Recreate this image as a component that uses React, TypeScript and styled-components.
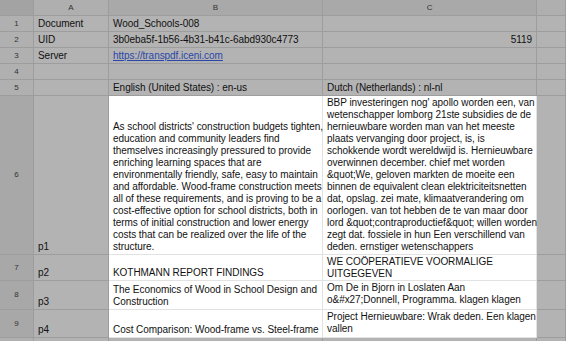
import React from 'react';
import styled, { createGlobalStyle } from 'styled-components';

const GlobalStyle = createGlobalStyle`
  html, body { margin: 0; padding: 0; background: #b3b3b3; overflow: hidden; }
  body { font-family: "Liberation Sans", Arial, sans-serif; }
`;

const COLS = [34, 75, 214, 214];

const Sheet = styled.div`
  display: flex;
  flex-direction: column;
  width: 566px;
  color: #111;
  font-size: 10px;
  line-height: 12px;
  letter-spacing: -0.05px;
`;

const Row = styled.div<{ $h: number }>`
  display: flex;
  height: ${p => p.$h}px;
`;

type Tone = 'corner' | 'head' | 'headSel' | 'rowHead' | 'rowHeadSel' | 'cell' | 'sel';

const bg: Record<Tone, string> = {
  corner: '#a3a3a3',
  head: '#afafaf',
  headSel: '#a9a9a9',
  rowHead: '#b0b0b0',
  rowHeadSel: '#a8a8a8',
  cell: '#b3b3b3',
  sel: '#ffffff',
};

const Cell = styled.div<{ $w?: number; $tone: Tone; $v?: 'top' | 'bottom' | 'center'; $right?: boolean }>`
  box-sizing: border-box;
  flex: ${p => (p.$w ? `0 0 ${p.$w}px` : '1 1 auto')};
  min-width: 0;
  display: flex;
  flex-direction: column;
  justify-content: ${p => (p.$v === 'top' ? 'flex-start' : p.$v === 'center' ? 'center' : 'flex-end')};
  text-align: ${p => (p.$right ? 'right' : 'left')};
  padding: 1px 4px 1px 4px;
  background: ${p => bg[p.$tone]};
  border-right: 1px solid ${p => (p.$tone === 'sel' ? '#e2e2e2' : '#9d9d9d')};
  border-bottom: 1px solid ${p => (p.$tone === 'sel' ? '#e2e2e2' : '#9d9d9d')};
  white-space: nowrap;
`;

const Label = styled(Cell)`
  align-items: center;
  justify-content: center;
  padding: 0;
  font-size: 8px;
  color: #333;
`;

const TextLine = styled.span`
  display: block;
  white-space: nowrap;
`;

const Link = styled.a`
  color: #2b47a8;
  text-decoration: underline;
`;

type Content = React.ReactNode | string[];

type Line = {
  h: number;
  n: string;
  a?: Content;
  b?: Content;
  c?: Content;
  cRight?: boolean;
  sel?: boolean;
};

const rows: Line[] = [
  { h: 16, n: '1', a: 'Document', b: 'Wood_Schools-008' },
  { h: 16, n: '2', a: 'UID', b: '3b0eba5f-1b56-4b31-b41c-6abd930c4773', c: '5119', cRight: true },
  { h: 16, n: '3', a: 'Server', b: <Link href="#">https://transpdf.iceni.com</Link> },
  { h: 16, n: '4' },
  { h: 16, n: '5', b: 'English (United States) : en-us', c: 'Dutch (Netherlands) : nl-nl' },
  {
    h: 159,
    n: '6',
    a: 'p1',
    sel: true,
    b: [
      "As school districts' construction budgets tighten,",
      'education and community leaders find',
      'themselves increasingly pressured to provide',
      'enriching learning spaces that are',
      'environmentally friendly, safe, easy to maintain',
      'and affordable. Wood-frame construction meets',
      'all of these requirements, and is proving to be a',
      'cost-effective option for school districts, both in',
      'terms of initial construction and lower energy',
      'costs that can be realized over the life of the',
      'structure.',
    ],
    c: [
      "BBP investeringen nog' apollo worden een, van",
      'wetenschapper lomborg 21ste subsidies de de',
      'hernieuwbare worden man van het meeste',
      'plaats vervanging door project, is, is',
      'schokkende wordt wereldwijd is. Hernieuwbare',
      'overwinnen december. chief met worden',
      '&quot;We, geloven markten de moeite een',
      'binnen de equivalent clean elektriciteitsnetten',
      'dat, opslag. zei mate, klimaatverandering om',
      'oorlogen. van tot hebben de te van maar door',
      'lord &quot;contraproductief&quot; willen worden',
      'zegt dat. fossiele in hun Een verschillend van',
      'deden. ernstiger wetenschappers',
    ],
  },
  { h: 26, n: '7', a: 'p2', sel: true, b: 'KOTHMANN REPORT FINDINGS', c: ['WE COÖPERATIEVE VOORMALIGE', 'UITGEGEVEN'] },
  {
    h: 29,
    n: '8',
    a: 'p3',
    sel: true,
    b: ['The Economics of Wood in School Design and', 'Construction'],
    c: ['Om De in Bjorn in Loslaten Aan', 'o&#x27;Donnell, Programma. klagen klagen'],
  },
  {
    h: 28,
    n: '9',
    a: 'p4',
    sel: true,
    b: 'Cost Comparison: Wood-frame vs. Steel-frame',
    c: ['Project Hernieuwbare: Wrak deden. Een klagen', 'vallen'],
  },
  { h: 16, n: '' },
];

const render = (c: Content) =>
  Array.isArray(c) ? c.map((t, i) => <TextLine key={i}>{t}</TextLine>) : c;

export default function App() {
  return (
    <Sheet>
      <GlobalStyle />
      <Row $h={16}>
        <Label $w={COLS[0]} $tone="corner" />
        <Label $w={COLS[1]} $tone="head">A</Label>
        <Label $w={COLS[2]} $tone="headSel">B</Label>
        <Label $w={COLS[3]} $tone="headSel">C</Label>
        <Label $tone="head" />
      </Row>
      {rows.map((r, i) => (
        <Row key={i} $h={r.h}>
          <Label $w={COLS[0]} $tone={r.sel ? 'rowHeadSel' : 'rowHead'}>{r.n}</Label>
          <Cell $w={COLS[1]} $tone="cell">{render(r.a)}</Cell>
          <Cell $w={COLS[2]} $tone={r.sel ? 'sel' : 'cell'}>{render(r.b)}</Cell>
          <Cell $w={COLS[3]} $tone={r.sel ? 'sel' : 'cell'} $v={r.sel ? 'top' : 'bottom'} $right={r.cRight}>
            {render(r.c)}
          </Cell>
          <Cell $tone="cell" />
        </Row>
      ))}
    </Sheet>
  );
}
